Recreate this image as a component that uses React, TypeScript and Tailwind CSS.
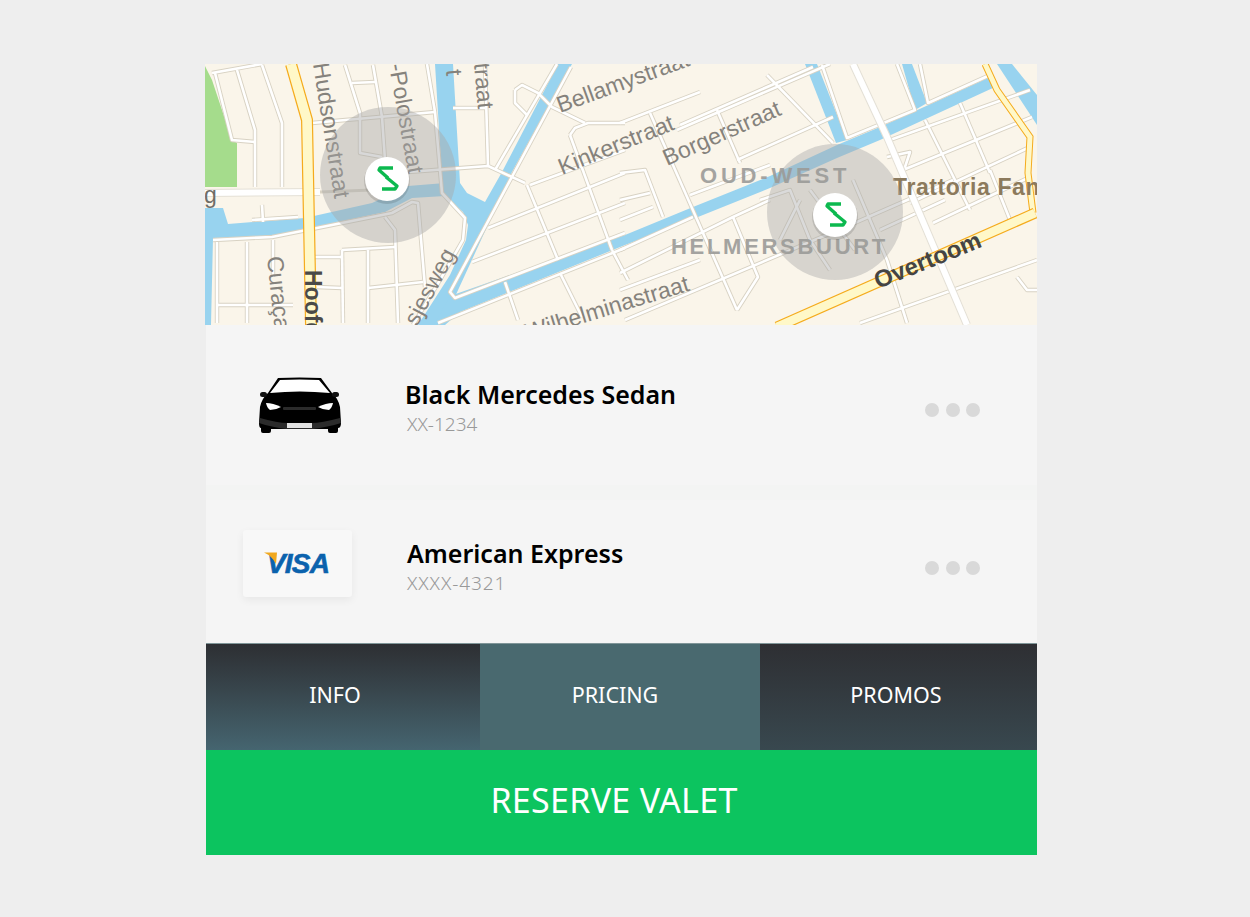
const water = [
  "205,208 223,208 228,224 305,218 372,203 408,186 445,183 445,196 412,198 385,212 315,227 272,237 213,238 211,325 205,325",
  "435,64 453,64 460,183 467,193 485,202 502,172 558,64 572,64 512,172 487,227 442,325 418,325 450,275 466,240 468,225 463,212 443,195",
  "434,325 450,296 625,235 693,207 770,176 837,145 880,127 990,77 995,87 880,140 837,158 770,188 693,219 625,245 460,312 445,325",
  "805,64 817,64 847,140 836,143",
  "902,64 912,64 927,103 915,110",
  "997,64 1012,64 1037,95 1037,125",
];

const roads = [
  "212,73 262,64", "215,73 232,140 255,142", "237,70 255,130 255,187", "262,65 282,123 282,187",
  "312,123 435,112", "345,65 360,113 360,153 382,157", "373,65 382,117 385,160", "352,83 375,82",
  "427,64 435,112 442,193 465,218 463,240 440,280 413,325", "408,172 488,166 525,183", "453,108 485,108",
  "485,64 488,166", "252,220 298,217", "262,205 263,222", "213,240 272,237 392,213 412,202 418,203 425,287",
  "385,217 395,230 398,323", "217,242 217,323", "247,242 247,323", "273,240 273,277", "218,305 293,305",
  "315,257 342,257", "342,250 395,247", "342,250 343,323", "368,250 368,323", "317,287 342,288", "368,288 423,282",
  "571,67 450,292 455,298 625,233", "557,64 495,170", "488,228 625,173", "472,262 625,203", "530,185 625,150",
  "527,185 558,260", "570,135 612,250", "570,135 575,128 588,123 625,123", "515,90 515,103 527,115",
  "515,90 522,85 538,93 552,107 585,123", "438,323 625,248", "505,282 518,320", "560,273 582,317", "612,250 628,280",
  "620,123 700,92", "677,130 830,64", "680,125 813,67", "650,113 737,310", "717,110 740,163", "767,75 833,143",
  "620,173 645,170 663,217", "620,200 650,193", "620,220 653,207", "737,160 833,117",
  "822,65 847,138 915,110 897,64", "920,64 928,103 990,75", "890,140 1030,90", "903,170 1032,117", "910,203 1030,147",
  "933,223 1030,177", "960,103 990,173", "925,120 970,210", "887,157 910,152 903,173", "853,180 887,260 907,323",
  "620,250 693,217", "620,273 733,217 770,200", "733,217 758,277 737,310", "625,320 850,225 953,180",
  "620,290 700,260", "860,323 1037,260", "1017,277 1027,290 1037,290", "990,170 1010,220", "880,230 945,200",
  "690,195 770,165", "760,200 790,190 810,240 830,270", "810,190 855,250", "780,240 800,200",
];

const labels = [
  { text: "Hudsonstraat", x: 313, y: 64, r: 81, s: 23, c: "#85827c" },
  { text: "-Polostraat", x: 389, y: 65, r: 80, s: 23, c: "#85827c" },
  { text: "t", x: 446, y: 70, r: 85, s: 23, c: "#85827c" },
  { text: "straat", x: 473, y: 52, r: 85, s: 23, c: "#85827c" },
  { text: "Bellamystraat", x: 560, y: 113, r: -20, s: 23, c: "#85827c" },
  { text: "Kinkerstraat", x: 562, y: 175, r: -22, s: 23, c: "#85827c" },
  { text: "Borgerstraat", x: 667, y: 166, r: -24, s: 23, c: "#85827c" },
  { text: "Wilhelminastraat", x: 528, y: 340, r: -17, s: 23, c: "#85827c" },
  { text: "sjesweg", x: 417, y: 327, r: -62, s: 23, c: "#85827c" },
  { text: "Curaçao", x: 267, y: 257, r: 84, s: 23, c: "#85827c" },
  { text: "g", x: 204, y: 203, r: 0, s: 23, c: "#6f6d68" },
];

function Pin({ x, y }: { x: number; y: number }) {
  return (
    <g transform={`translate(${x} ${y})`}>
      <circle cx="0" cy="2" r="23" fill="#000" opacity="0.12" />
      <circle cx="0" cy="0" r="22" fill="#fff" />
      <path d="M6 -11 H-7 L-8 -9 L1 -1" fill="none" stroke="#0cb94f" strokeWidth="3.4" strokeLinejoin="round" />
      <path d="M-1 -2 L10 7 L8 10 H-5" fill="none" stroke="#0cb94f" strokeWidth="3.4" strokeLinejoin="round" />
    </g>
  );
}

function MapView() {
  return (
    <svg className="block w-[832px] h-[261px]" viewBox="205 64 832 261">
      <rect x="205" y="64" width="832" height="261" fill="#faf5ea" />
      <polygon points="205,66 212,80 232,140 237,143 237,187 205,187" fill="#a5dc8c" />
      {water.map((p) => (
        <polygon key={p} points={p} fill="#98d3ef" />
      ))}
      {roads.map((p) => (
        <polyline key={p} points={p} fill="none" stroke="#d8d2c3" strokeWidth="4.4" strokeLinejoin="round" />
      ))}
      {roads.map((p) => (
        <polyline key={p + "w"} points={p} fill="none" stroke="#fff" strokeWidth="2.6" strokeLinejoin="round" />
      ))}
      {/* wide white roads */}
      <polyline points="205,193 320,192" fill="none" stroke="#e4e0d6" strokeWidth="8" />
      <polyline points="205,193 320,192" fill="none" stroke="#fff" strokeWidth="6" />
      <polyline points="320,192 372,190" fill="none" stroke="#d8d2c3" strokeWidth="3" />
      <polyline points="853,64 887,137 967,325" fill="none" stroke="#e4e0d6" strokeWidth="8" />
      <polyline points="853,64 887,137 967,325" fill="none" stroke="#fff" strokeWidth="6" />
      {/* yellow roads */}
      <polyline points="291,64 307,120 311,325" fill="none" stroke="#f5ab1c" strokeWidth="12" />
      <polyline points="291,64 307,120 311,325" fill="none" stroke="#fff8c8" strokeWidth="9.6" />
      <polyline points="985,64 997,90 1030,137 1028,173 1033,213" fill="none" stroke="#f5ab1c" strokeWidth="7" />
      <polyline points="985,64 997,90 1030,137 1028,173 1033,213" fill="none" stroke="#fff8c8" strokeWidth="5" />
      <polyline points="1035,213 777,327" fill="none" stroke="#f5ab1c" strokeWidth="11" />
      <polyline points="1035,213 777,327" fill="none" stroke="#fff8c8" strokeWidth="8.6" />

      <g fontFamily='"Liberation Sans", Arial, sans-serif'>
        {labels.map((l) => (
          <text key={l.text} x={l.x} y={l.y} fontSize={l.s} fill={l.c} transform={`rotate(${l.r} ${l.x} ${l.y})`}>
            {l.text}
          </text>
        ))}
        <text x="305" y="270" fontSize="23" fontWeight="700" fill="#4a4a48" transform="rotate(90 305 270)">Hoofd</text>
        <text x="878" y="289" fontSize="24" fontWeight="700" fill="#444" transform="rotate(-22 878 289)">Overtoom</text>
        <text x="893" y="195" fontSize="23" fontWeight="700" fill="#8c7a5c" letterSpacing="0.6">Trattoria Fan</text>
      </g>

      <circle cx="388" cy="175" r="68" fill="#a8a8a8" opacity="0.45" />
      <circle cx="835" cy="212" r="68" fill="#a8a8a8" opacity="0.42" />

      <g fontFamily='"Liberation Sans", Arial, sans-serif' fontWeight="700" fill="#9b9b98" opacity="0.9">
        <text x="700" y="183" fontSize="22" letterSpacing="3.8">OUD-WEST</text>
        <text x="671" y="254" fontSize="22" letterSpacing="2.7">HELMERSBUURT</text>
      </g>

      <Pin x={387} y={179} />
      <Pin x={835} y={215} />
    </svg>
  );
}

function CarIcon() {
  return (
    <svg className="w-[84px] h-[57px]" viewBox="0 0 84 57">
      <path d="M20 1 Q41.5 0 63 1 L74 16 Q80 21 82 30 L83 46 Q83 51 80 51 L80 54 Q80 56 78 56 H72 Q70 56 70 54 V52 H13 V54 Q13 56 11 56 H5 Q3 56 3 54 V51 Q1 51 1 46 L2 30 Q4 21 10 16 Z" fill="#000" />
      <path d="M22 3 Q41.5 2 61 3 L72 16 Q41.5 13 12 16 Z" fill="#fff" />
      <rect x="2" y="15" width="7" height="5" rx="2.5" fill="#111" />
      <rect x="74" y="15" width="7" height="5" rx="2.5" fill="#111" />
      <path d="M8 26 Q15 26 23 30 Q18 33 12 33 Q9 31 8 26 Z" fill="#fff" />
      <path d="M75 26 Q68 26 60 30 Q65 33 71 33 Q74 31 75 26 Z" fill="#fff" />
      <rect x="25" y="30" width="33" height="3" rx="1" fill="#2b2b2b" />
      <path d="M2 41 Q20 46 29 46 H54 Q63 46 82 41 L83 46 Q70 50 54 52 H29 Q13 50 1 46 Z" fill="#2b2b2b" />
      <rect x="29" y="46" width="25" height="5" fill="#e2e2e2" />
    </svg>
  );
}

function Dots() {
  return (
    <div className="flex gap-[6.5px]">
      <span className="w-[14px] h-[14px] rounded-full bg-[#d9d9d9]" />
      <span className="w-[14px] h-[14px] rounded-full bg-[#d9d9d9]" />
      <span className="w-[14px] h-[14px] rounded-full bg-[#d9d9d9]" />
    </div>
  );
}

function VisaCard() {
  return (
    <div className="relative -mt-[16px] w-[109px] h-[67px] rounded-[3px] bg-[#f8f8f8] shadow-[0_3px_8px_rgba(0,0,0,0.06)] flex items-center justify-center">
      <span className="relative left-[0.5px] text-[28px] font-bold italic leading-none tracking-[-0.8px] text-[#0b62ad] [-webkit-text-stroke:0.6px_#0b62ad] font-['Liberation_Sans',Arial,sans-serif]">
        VISA
      </span>
      <svg className="absolute left-[21px] top-[22px] w-[15px] h-[13px]" viewBox="0 0 15 13">
        <path d="M0 0.5 H13 L12 12 Q8 4 0 0.5 Z" fill="#f0a81e" />
      </svg>
    </div>
  );
}

export default function App() {
  return (
    <div className="min-h-screen bg-[#eeeeee] pt-16 pl-[205px] font-['Noto_Sans',sans-serif]">
      <div className="w-[832px]">
        <MapView />
        <div className="pl-px">
          <div className="h-[160px] bg-[#f5f5f5] flex items-center pl-[52px] pr-[57px]">
            <CarIcon />
            <div className="ml-[63px] mt-[2px]">
              <div className="text-[25px] leading-[34px] font-semibold text-black">Black Mercedes Sedan</div>
              <div className="ml-[2px] mt-[2px] text-[19px] leading-[22px] font-light text-[#999]">XX-1234</div>
            </div>
            <div className="ml-auto mt-[10px]">
              <Dots />
            </div>
          </div>
          <div className="h-[15px] bg-[#f3f4f3]" />
          <div className="h-[143px] bg-[#f5f5f5] flex items-center pl-[37px] pr-[57px]">
            <VisaCard />
            <div className="ml-[55px] -mt-[13px]">
              <div className="text-[25px] leading-[34px] font-semibold text-black">American Express</div>
              <div className="mt-[2px] text-[19px] leading-[22px] font-light tracking-[0.9px] text-[#999]">XXXX-4321</div>
            </div>
            <div className="ml-auto -mt-[8px]">
              <Dots />
            </div>
          </div>
          <div className="flex h-[107px] text-[21.5px] text-white border-t border-[#7f9598]">
            <div className="w-[274px] pr-[16px] pb-[4px] flex items-center justify-center bg-gradient-to-b from-[#2d2f33] to-[#456570]">INFO</div>
            <div className="w-[280px] pr-[10px] pb-[4px] flex items-center justify-center bg-[#49696f]">PRICING</div>
            <div className="w-[277px] pr-[5px] pb-[4px] flex items-center justify-center bg-gradient-to-b from-[#2e2f33] to-[#38484f]">PROMOS</div>
          </div>
          <div className="h-[105px] pr-[15px] pb-[4px] bg-[#0cc45f] flex items-center justify-center text-[34px] tracking-[0.3px] text-white">
            RESERVE VALET
          </div>
        </div>
      </div>
    </div>
  );
}
